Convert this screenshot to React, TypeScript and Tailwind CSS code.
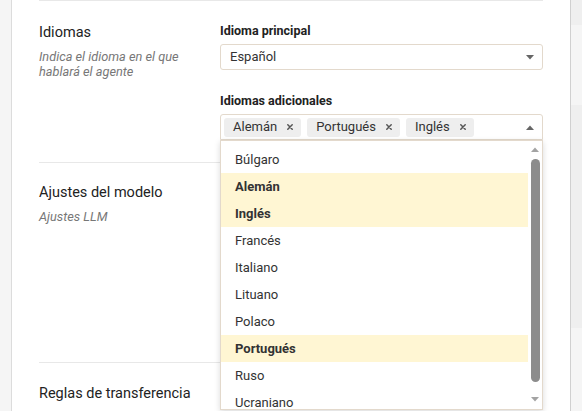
import React from "react";

const items: { label: string; selected: boolean }[] = [
  { label: "Búlgaro", selected: false },
  { label: "Alemán", selected: true },
  { label: "Inglés", selected: true },
  { label: "Francés", selected: false },
  { label: "Italiano", selected: false },
  { label: "Lituano", selected: false },
  { label: "Polaco", selected: false },
  { label: "Portugués", selected: true },
  { label: "Ruso", selected: false },
  { label: "Ucraniano", selected: false },
];

function CaretDown({ color = "#666" }: { color?: string }) {
  return (
    <svg width="8" height="5" viewBox="0 0 8 5" className="block">
      <path d="M0 0 L8 0 L4 4.5 Z" fill={color} />
    </svg>
  );
}

function CaretUp({ color = "#666" }: { color?: string }) {
  return (
    <svg width="8" height="5" viewBox="0 0 8 5" className="block">
      <path d="M0 5 L8 5 L4 0.5 Z" fill={color} />
    </svg>
  );
}

function Chip({ label }: { label: string }) {
  return (
    <div className="flex h-[19px] items-center rounded-[3px] bg-[#eeeeee] pl-[9px] pr-[8px] text-[13px] text-[#333]">
      <span>{label}</span>
      <svg width="6" height="6" viewBox="0 0 6 6" className="ml-[10px] block">
        <path d="M0.8 0.8 L5.2 5.2 M5.2 0.8 L0.8 5.2" stroke="#555" strokeWidth="1.5" strokeLinecap="round" />
      </svg>
    </div>
  );
}

export default function App() {
  return (
    <div
      className="flex h-[411px] w-[582px] overflow-hidden bg-[#f5f5f5]"
      style={{ fontFamily: "Roboto, 'Liberation Sans', sans-serif" }}
    >
      <div className="w-[12px] shrink-0 border-r border-[#dcdcdc] bg-[#f5f5f5]" />
      <div className="flex-1 bg-white px-[27px]">
        {/* Section 1 */}
        <div className="flex border-t border-[#e8e8e8] pt-[22px] pb-[22px]">
          <div className="w-[181px] shrink-0">
            <div className="text-[14.5px] leading-[20px] text-[#222]">Idiomas</div>
            <div className="mt-[6px] text-[12.75px] italic leading-[15px] text-[#777]">
              Indica el idioma en el que
              <br />
              hablará el agente
            </div>
          </div>
          <div className="flex-1">
            <div className="text-[12.5px] font-bold leading-[16px] text-[#222]">Idioma principal</div>
            <div className="mt-[5px] flex h-[26px] items-center justify-between rounded-[3px] border border-[#e3d9cc] pl-[9px] pr-[8px] text-[13px] text-[#333]">
              <span>Español</span>
              <CaretDown />
            </div>
            <div className="mt-[23px] text-[12.5px] font-bold leading-[16px] text-[#222]">Idiomas adicionales</div>
            <div className="relative mt-[5px] flex h-[26px] items-center rounded-t-[3px] border border-[#e3d9cc] pl-[3px] pr-[8px]">
              <div className="flex flex-1 items-center gap-[6px]">
                <Chip label="Alemán" />
                <Chip label="Portugués" />
                <Chip label="Inglés" />
              </div>
              <CaretUp />
              {/* Dropdown */}
              <div className="absolute left-[-1px] right-[-1px] top-[25px] z-10 flex h-[270px] overflow-hidden border border-[#e3d9cc] bg-white shadow-[0_2px_6px_rgba(0,0,0,0.15)]">
                <div className="flex-1 pt-[5px]">
                  {items.map((it) => (
                    <div
                      key={it.label}
                      className={`flex h-[27px] items-center pl-[14px] text-[13px] text-[#333] ${
                        it.selected ? "bg-[#fff6d3] font-bold" : ""
                      }`}
                    >
                      {it.label}
                    </div>
                  ))}
                </div>
                <div className="flex w-[14px] shrink-0 flex-col items-center">
                  <div className="mt-[6px]">
                    <CaretUp color="#a3a3a3" />
                  </div>
                  <div className="mt-[7px] h-[223px] w-[9px] rounded-full bg-[#8c8c8c]" />
                  <div className="mt-[15px]">
                    <CaretDown color="#a3a3a3" />
                  </div>
                </div>
              </div>
            </div>
          </div>
        </div>
        {/* Section 2 */}
        <div className="flex h-[200px] border-t border-[#e8e8e8] pt-[20px]">
          <div className="w-[181px] shrink-0">
            <div className="text-[14.5px] leading-[20px] text-[#222]">Ajustes del modelo</div>
            <div className="mt-[6px] text-[12.75px] italic leading-[15px] text-[#777]">Ajustes LLM</div>
          </div>
          <div className="flex-1" />
        </div>
        {/* Section 3 */}
        <div className="flex border-t border-[#e8e8e8] pt-[21px]">
          <div className="w-[181px] shrink-0">
            <div className="text-[14.5px] leading-[20px] text-[#222]">Reglas de transferencia</div>
          </div>
          <div className="flex-1" />
        </div>
      </div>
      <div className="flex w-[12px] shrink-0 flex-col border-l border-[#d0d0d0]">
        <div className="h-[25px] bg-[#efefef]" />
        <div className="h-[80px] bg-[#f5f5f5]" />
        <div className="h-[223px] bg-[#efefef]" />
        <div className="flex-1 bg-[#f5f5f5]" />
      </div>
    </div>
  );
}
